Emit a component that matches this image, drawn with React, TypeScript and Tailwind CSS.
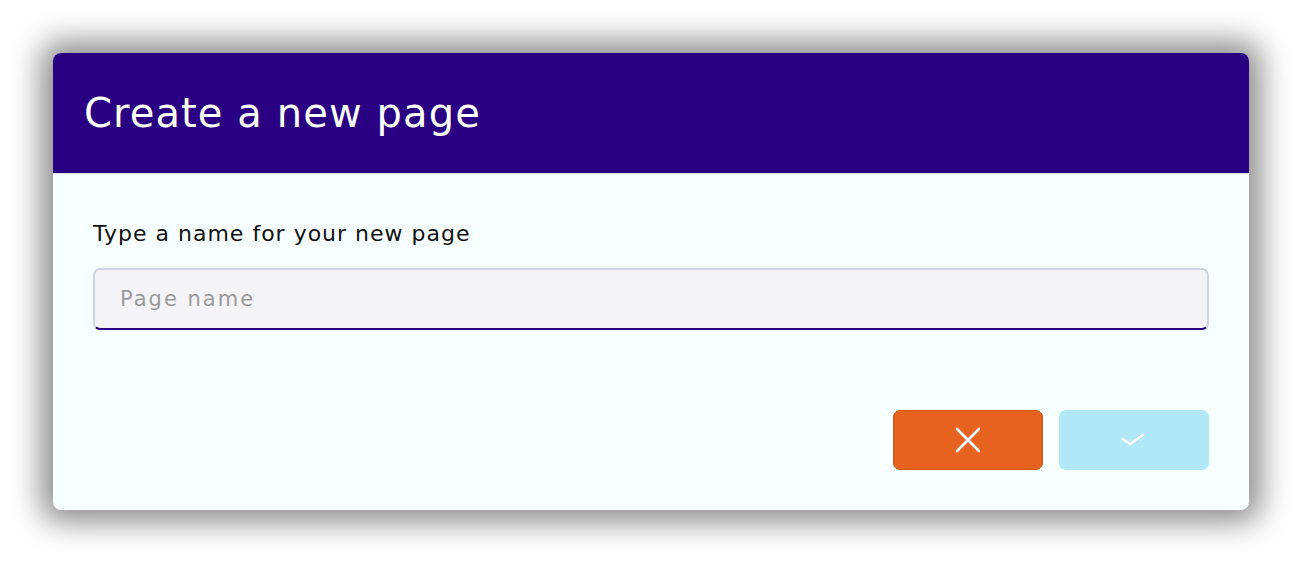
import React, { useState } from 'react';

const CloseIcon: React.FC = () => (
    <svg width="26" height="26" viewBox="0 0 26 26" fill="none" stroke="white" strokeWidth="2.6" strokeLinecap="round">
        <path d="M2 2L24 24M24 2L2 24" />
    </svg>
);

const CheckIcon: React.FC = () => (
    <svg width="26" height="16" viewBox="0 0 26 16" fill="none" stroke="white" strokeWidth="2.6" strokeLinecap="round" strokeLinejoin="round">
        <path d="M2 7L9 12L22 3" />
    </svg>
);

const NewPageModal: React.FC = () => {
    const [name, setName] = useState('');

    return (
        <div className="w-[1196px] h-[457px] rounded-[8px] overflow-hidden bg-[#f8ffff] shadow-[0_0_30px_12px_rgba(0,0,0,0.45)] flex flex-col">
            <div className="h-[121px] shrink-0 bg-[#2a0082] border-b border-[#d8dce6] flex items-center pl-[31px]">
                <h1 className="text-white text-[40px] leading-none tracking-[1.1px]">Create a new page</h1>
            </div>
            <div className="flex-1 flex flex-col px-[40px] pt-[46px]">
                <label className="text-[22px] text-[#111] leading-[28px] tracking-[1px]">Type a name for your new page</label>
                <input
                    value={name}
                    onChange={e => setName(e.target.value)}
                    placeholder="Page name"
                    className="mt-[20px] h-[62px] w-full rounded-[7px] bg-[#f4f4f7] border-2 border-[#cdd4e0] border-b-[#2a0082] px-[25px] text-[21px] tracking-[2px] text-[#222] placeholder:text-[#9b9b9b] outline-none"
                />
                <div className="flex justify-end gap-[16px] mt-[80px]">
                    <button className="w-[150px] h-[60px] rounded-[7px] bg-[#e5621f] border border-[#cf5218] flex items-center justify-center">
                        <CloseIcon />
                    </button>
                    <button className="w-[150px] h-[60px] rounded-[7px] bg-[#b0e8f8] flex items-center justify-center">
                        <CheckIcon />
                    </button>
                </div>
            </div>
        </div>
    );
};

const App: React.FC = () => (
    <div className="min-h-[580px] bg-white p-[53px] pb-0" style={{ fontFamily: '"DejaVu Sans", sans-serif' }}>
        <NewPageModal />
    </div>
);

export default App;
